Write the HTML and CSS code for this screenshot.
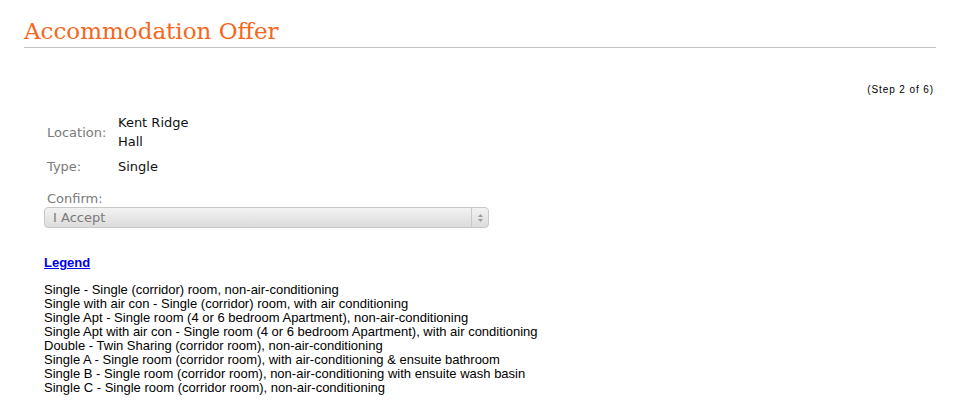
FILE: index.html
```html
<!DOCTYPE html>
<html>
<head>
    <title>Accommodation Offer</title>
    <link rel="stylesheet" href="styles.css">
</head>
<body>
    <h1 class="page-title">Accommodation Offer</h1>

    <div class="step">(Step 2 of 6)</div>

    <div class="offer">
        <div class="offer-row">
            <span class="offer-label">Location:</span>
            <span class="offer-value">Kent Ridge Hall</span>
        </div>
        <div class="offer-row">
            <span class="offer-label">Type:</span>
            <span class="offer-value">Single</span>
        </div>
    </div>

    <div class="confirm">
        <label class="confirm-label">Confirm:</label>
        <div class="select">
            <span class="select-text">I Accept</span>
            <span class="select-arrow">
                <svg width="7" height="10" viewBox="0 0 7 10">
                    <path d="M3.5 1 L6 4 L1 4 Z" fill="#999"/>
                    <path d="M3.5 9 L6 6 L1 6 Z" fill="#999"/>
                </svg>
            </span>
        </div>
    </div>

    <div class="legend">
        <a href="#" class="legend-title">Legend</a>
        <div class="legend-list">
            Single - Single (corridor) room, non-air-conditioning<br>
            Single with air con - Single (corridor) room, with air conditioning<br>
            Single Apt - Single room (4 or 6 bedroom Apartment), non-air-conditioning<br>
            Single Apt with air con - Single room (4 or 6 bedroom Apartment), with air conditioning<br>
            Double - Twin Sharing (corridor room), non-air-conditioning<br>
            Single A - Single room (corridor room), with air-conditioning &amp; ensuite bathroom<br>
            Single B - Single room (corridor room), non-air-conditioning with ensuite wash basin<br>
            Single C - Single room (corridor room), non-air-conditioning
        </div>
    </div>
</body>
</html>
```

FILE: styles.css
```css
body {
    margin: 0;
    padding: 0 24px;
    background: #fff;
    font-family: "Liberation Sans", Arial, sans-serif;
    color: #000;
}
.page-title {
    margin: 0;
    padding-top: 17px;
    padding-bottom: 2px;
    font-family: "DejaVu Serif", Georgia, serif;
    font-weight: normal;
    font-size: 23px;
    line-height: 28px;
    color: #f6661b;
    border-bottom: 1px solid #c4c4c4;
}
.step {
    margin-top: 36px;
    padding-right: 2px;
    text-align: right;
    font-size: 10px;
    letter-spacing: 0.9px;
    line-height: 12px;
}
.offer {
    margin-top: 17px;
    padding-left: 23px;
    font-family: "DejaVu Sans", Verdana, sans-serif;
    font-size: 13px;
}
.offer-row {
    display: flex;
    align-items: center;
    margin-bottom: 6px;
}
.offer-label {
    width: 71px;
    color: #7a7a7a;
}
.offer-value {
    width: 80px;
    line-height: 19px;
    color: #111;
}
.confirm {
    margin-top: 15px;
    padding-left: 20px;
    font-family: "DejaVu Sans", Verdana, sans-serif;
    font-size: 13px;
}
.confirm-label {
    display: block;
    padding-left: 3px;
    line-height: 16px;
    color: #7a7a7a;
}
.select {
    display: flex;
    align-items: center;
    width: 443px;
    height: 19px;
    border: 1px solid #c8c8c8;
    border-radius: 4px;
    background: linear-gradient(#f2f2f2, #dcdcdc);
}
.select-text {
    flex: 1;
    padding-left: 8px;
    color: #7a7a7a;
}
.select-arrow {
    display: flex;
    align-items: center;
    justify-content: center;
    width: 16px;
    height: 19px;
    border-left: 1px solid #c8c8c8;
}
.legend {
    margin-top: 27px;
    padding-left: 20px;
    font-size: 13px;
}
.legend-title {
    font-weight: bold;
    color: #0000ee;
    text-decoration: underline;
}
.legend-list {
    margin-top: 13px;
    font-size: 13px;
    line-height: 14px;
}
```
